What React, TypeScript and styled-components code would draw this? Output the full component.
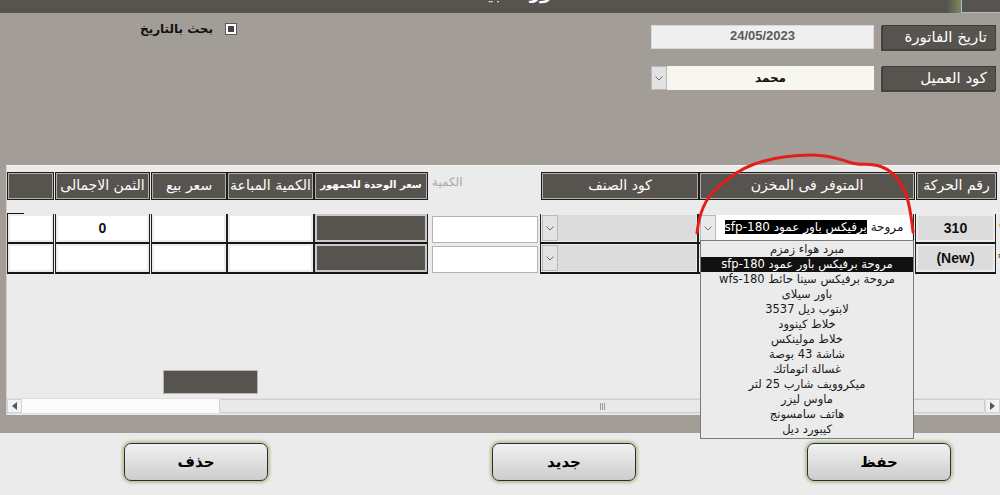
import * as React from "react";
import styled, { createGlobalStyle } from "styled-components";

const GlobalStyle = createGlobalStyle`
  html, body {
    margin: 0;
    padding: 0;
    background: #ebebeb;
  }
  body {
    font-family: "Liberation Sans", "DejaVu Sans", sans-serif;
  }
`;

const DARK = "#57544f";
const FORM_BG = "#a29e97";
const PANEL_BG = "#ebebeb";

interface ICol {
  x: number;
  w: number;
}

// column geometry shared by header and data rows
const COLS: ICol[] = [
  { x: 7, w: 47 },
  { x: 55, w: 95 },
  { x: 151, w: 76 },
  { x: 227, w: 87 },
  { x: 314, w: 114 },
  { x: 432, w: 107 },
  { x: 541, w: 158 },
  { x: 699, w: 216 },
  { x: 916, w: 81 },
];

const gapBefore = (i: number) => (i === 0 ? 0 : COLS[i].x - (COLS[i - 1].x + COLS[i - 1].w));

const ITEMS = [
  "مبرد هواء زمزم",
  "مروحة برفيكس باور عمود sfp-180",
  "مروحة  برفيكس سينا حائط wfs-180",
  "باور سيلاى",
  "لابتوب ديل 3537",
  "خلاط كينوود",
  "خلاط مولينكس",
  "شاشة 43 بوصة",
  "غسالة اتوماتك",
  "ميكروويف شارب 25 لتر",
  "ماوس ليزر",
  "هاتف سامسونج",
  "كيبورد  ديل",
];

const Root = styled.div`
  position: relative;
  width: 1000px;
  height: 495px;
  overflow: hidden;
  background: ${PANEL_BG};
`;

const TitleBar = styled.div`
  display: flex;
  height: 13px;
  background: ${DARK};
  overflow: hidden;
`;

const TitleText = styled.div`
  margin: -18px 0 0 452px;
  color: #fff;
  font: bold 18px "DejaVu Sans", sans-serif;
  direction: rtl;
  white-space: nowrap;
`;

const Spacer = styled.div`
  flex: 1;
`;

const GreenFade = styled.div`
  width: 14px;
  background: linear-gradient(to right, ${DARK}, #7e8a5c);
`;

const CornerTab = styled.div`
  width: 38px;
  border-left: 1px solid #a9bccd;
  border-bottom: 1px solid #a9bccd;
  background: ${DARK};
`;

const FormArea = styled.div`
  display: flex;
  justify-content: space-between;
  height: 152px;
  background: ${FORM_BG};
`;

const SearchBox = styled.div`
  display: flex;
  align-items: center;
  gap: 12px;
  height: 14px;
  margin: 9px 0 0 140px;
`;

const SearchLabel = styled.span`
  font: bold 12px "DejaVu Sans", sans-serif;
  color: #111;
  direction: rtl;
`;

const CheckBox = styled.div`
  display: flex;
  align-items: center;
  justify-content: center;
  box-sizing: border-box;
  width: 12px;
  height: 12px;
  background: #fff;
  border: 1px solid #5a5a5a;
  &::after {
    content: "";
    width: 6px;
    height: 6px;
    background: #444;
  }
`;

const Fields = styled.div`
  display: flex;
  flex-direction: column;
  gap: 16px;
  padding: 12px 4px 0 0;
`;

const FieldRow = styled.div`
  display: flex;
  align-items: flex-start;
  gap: 8px;
`;

const FieldLabel = styled.div`
  box-sizing: border-box;
  width: 114px;
  height: 25px;
  background: ${DARK};
  border: 1px solid #3f3d39;
  box-shadow: -1px 1px 0 #4a4844;
  color: #fff;
  font: 15px "DejaVu Sans", sans-serif;
  direction: rtl;
  padding-right: 8px;
  line-height: 23px;
  text-align: right;
`;

const DateInput = styled.div`
  box-sizing: border-box;
  width: 223px;
  height: 24px;
  background: #efefef;
  border: 1px solid #d9d9d9;
  color: #5b5b5b;
  font: bold 13px "Liberation Sans", sans-serif;
  text-align: center;
  line-height: 20px;
`;

const Combo = styled.div<{ $w: number; $h: number; $bg: string }>`
  display: flex;
  box-sizing: border-box;
  width: ${(p) => p.$w}px;
  height: ${(p) => p.$h}px;
  background: ${(p) => p.$bg};
`;

const ComboButton = styled.div<{ $bg?: string }>`
  display: flex;
  align-items: center;
  justify-content: center;
  box-sizing: border-box;
  width: 16px;
  height: 100%;
  background: ${(p) => p.$bg || "#e1e1e1"};
  border: 1px solid #b9b9b9;
  color: #666;
`;

const ComboField = styled.div<{ $bold?: boolean }>`
  flex: 1;
  text-align: center;
  direction: rtl;
  font: ${(p) => (p.$bold ? "bold 12px" : "12px")} "DejaVu Sans", sans-serif;
  color: #111;
  line-height: 24px;
  white-space: nowrap;
  overflow: hidden;
`;

const Chevron = () => (
  <svg width="8" height="5" viewBox="0 0 8 5">
    <path d="M0.5 0.5 L4 4 L7.5 0.5" fill="none" stroke="#6a6a6a" strokeWidth="1" />
  </svg>
);

const PanelWrap = styled.div`
  background: ${FORM_BG};
  padding: 0 0 18px 6px;
`;

const Panel = styled.div`
  position: relative;
  display: flex;
  flex-direction: column;
  box-sizing: border-box;
  height: 250px;
  background: ${PANEL_BG};
  border-top: 1px solid #fafafa;
  border-left: 1px solid #d0d0d0;
`;

const HeaderRow = styled.div`
  display: flex;
  height: 28px;
  margin-top: 6px;
`;

const HeadCell = styled.div<{ $w: number; $ml: number; $small?: boolean; $plain?: boolean }>`
  box-sizing: border-box;
  width: ${(p) => p.$w}px;
  margin-left: ${(p) => p.$ml}px;
  background: ${(p) => (p.$plain ? "transparent" : DARK)};
  border: ${(p) => (p.$plain ? "none" : "1px solid #1c1c1c")};
  box-shadow: ${(p) => (p.$plain ? "none" : "inset 0 0 0 1px #b4b1ab")};
  color: ${(p) => (p.$plain ? "#a7a7a7" : "#fff")};
  font: ${(p) => (p.$small ? "bold 10px" : p.$plain ? "12px" : "14px")} "DejaVu Sans", sans-serif;
  direction: rtl;
  text-align: ${(p) => (p.$plain ? "left" : "center")};
  line-height: ${(p) => (p.$small ? "24px" : p.$plain ? "20px" : "25px")};
  white-space: nowrap;
  overflow: hidden;
`;

const PlainLabel = styled.span`
  display: inline-block;
`;

const TopMark = styled.div`
  width: 17px;
  height: 1px;
  margin-top: 13px;
  background: #111;
`;

const DataRow = styled.div`
  position: relative;
  display: flex;
  height: 30px;
`;

type CellKind = "white" | "dark" | "input" | "grey" | "combo";

const Cell = styled.div<{ $w: number; $ml: number; $kind: CellKind }>`
  display: flex;
  box-sizing: border-box;
  width: ${(p) => p.$w}px;
  margin-left: ${(p) => p.$ml}px;
  height: ${(p) => (p.$kind === "input" ? "27px" : "30px")};
  margin-top: ${(p) => (p.$kind === "input" ? "2px" : "0")};
  background: ${(p) =>
    p.$kind === "dark" ? DARK : p.$kind === "grey" ? "#dcdcdc" : p.$kind === "combo" ? PANEL_BG : "#fff"};
  border: ${(p) => (p.$kind === "input" ? "1px solid #b3b3b3" : "none")};
  border-left: ${(p) => (p.$kind === "input" ? "1px solid #b3b3b3" : "1px solid #202020")};
  border-right: ${(p) => (p.$kind === "input" ? "1px solid #b3b3b3" : "1px solid #202020")};
  border-bottom: ${(p) => (p.$kind === "input" ? "1px solid #b3b3b3" : "2px solid #151515")};
  box-shadow: ${(p) =>
    p.$kind === "input" || p.$kind === "combo"
      ? "none"
      : p.$kind === "dark"
      ? "inset 0 0 0 2px #c9c9c9"
      : p.$kind === "grey"
      ? "inset 0 0 0 2px #ebebeb"
      : "inset 0 0 0 2px #ececec"};
  align-items: center;
  justify-content: center;
  font: bold 14px "Liberation Sans", "DejaVu Sans", sans-serif;
  color: #111;
`;

const CellCombo = styled.div<{ $bg: string }>`
  display: flex;
  flex: 1;
  height: 26px;
  margin: 1px;
  background: ${(p) => p.$bg};
`;

const Selected = styled.span`
  background: #000;
  color: #fff;
`;

const RecordMark = styled.div<{ $color: string }>`
  position: absolute;
  right: -6px;
  top: 6px;
  width: 8px;
  font: bold 13px "DejaVu Sans", sans-serif;
  color: ${(p) => p.$color};
`;

const FooterBox = styled.div`
  box-sizing: border-box;
  width: 95px;
  height: 24px;
  margin: 96px 0 0 156px;
  background: ${DARK};
  border: 1px solid #b6b6b6;
`;

const ScrollBar = styled.div`
  display: flex;
  height: 16px;
  margin-top: 4px;
  background: #f0f0f0;
  border-top: 1px solid #dedede;
  border-bottom: 1px solid #dedede;
  box-sizing: border-box;
`;

const ScrollArrow = styled.div`
  display: flex;
  align-items: center;
  justify-content: center;
  width: 15px;
  background: #f3f3f3;
  border: 1px solid #d4d4d4;
  box-sizing: border-box;
`;

const ScrollTrack = styled.div`
  width: 197px;
  background: #fbfbfb;
`;

const ScrollThumb = styled.div`
  display: flex;
  align-items: center;
  justify-content: center;
  flex: 1;
  background: #e9e9e9;
  border: 1px solid #cfcfcf;
  border-radius: 2px;
  box-sizing: border-box;
`;

const Grip = styled.div`
  width: 5px;
  height: 7px;
  background: repeating-linear-gradient(to right, #9a9a9a 0 1px, transparent 1px 2px);
`;

const ButtonBar = styled.div`
  display: flex;
  height: 62px;
  padding-top: 10px;
  box-sizing: border-box;
`;

const ActionButton = styled.button<{ $ml: number }>`
  width: 144px;
  height: 38px;
  margin-left: ${(p) => p.$ml}px;
  border: 1px solid #2e2e2e;
  border-radius: 7px;
  background: linear-gradient(#f1f1f1, #cdcdcd);
  box-shadow: 0 0 3px 2px #b3c497;
  font: bold 15px "DejaVu Sans", sans-serif;
  color: #000;
  direction: rtl;
  padding: 0;
`;

const DropList = styled.div`
  position: absolute;
  left: 700px;
  top: 240px;
  width: 214px;
  height: 199px;
  box-sizing: border-box;
  padding-top: 1px;
  background: #ebebeb;
  border: 1px solid #7a7a7a;
  z-index: 2;
`;

const DropItem = styled.div<{ $active?: boolean }>`
  height: 15px;
  line-height: 15px;
  text-align: center;
  direction: rtl;
  font: 11.5px "DejaVu Sans", sans-serif;
  color: ${(p) => (p.$active ? "#fff" : "#1a1a1a")};
  background: ${(p) => (p.$active ? "#111" : "transparent")};
  white-space: nowrap;
`;

const Scribble = styled.svg`
  position: absolute;
  left: 0;
  top: 0;
  z-index: 3;
  pointer-events: none;
`;

const headers: { label: string; small?: boolean; plain?: boolean }[] = [
  { label: "" },
  { label: "الثمن الاجمالى" },
  { label: "سعر بيع" },
  { label: "الكمية المباعة" },
  { label: "سعر الوحدة للجمهور", small: true },
  { label: "الكمية", plain: true },
  { label: "كود الصنف" },
  { label: "المتوفر فى المخزن" },
  { label: "رقم الحركة" },
];

const renderRow = (first: boolean) =>
  COLS.map((c, i) => {
    const ml = gapBefore(i);
    if (i === 4) return <Cell key={i} $w={c.w} $ml={ml} $kind="dark" />;
    if (i === 5) return <Cell key={i} $w={c.w - 1} $ml={ml} $kind="input" />;
    if (i === 6)
      return (
        <Cell key={i} $w={c.w} $ml={ml} $kind="combo">
          <CellCombo $bg="#dcdcdc">
            <ComboButton $bg="#e3e3e3">
              <Chevron />
            </ComboButton>
          </CellCombo>
        </Cell>
      );
    if (i === 7)
      return (
        <Cell key={i} $w={c.w} $ml={ml} $kind="combo">
          <CellCombo $bg="#fff">
            <ComboButton $bg="#e9e9e9">
              <Chevron />
            </ComboButton>
            {first && (
              <ComboField>
                <span>مروحة </span>
                <Selected>برفيكس باور عمود sfp-180</Selected>
              </ComboField>
            )}
          </CellCombo>
        </Cell>
      );
    if (i === 8)
      return (
        <Cell key={i} $w={c.w} $ml={ml} $kind="grey">
          {first ? "310" : "(New)"}
        </Cell>
      );
    return (
      <Cell key={i} $w={c.w} $ml={ml} $kind="white">
        {first && i === 1 ? "0" : ""}
      </Cell>
    );
  });

const App: React.FC = () => {
  return (
    <>
      <GlobalStyle />
      <Root>
        <TitleBar>
          <TitleText>فاتورة مبيعات</TitleText>
          <Spacer />
          <GreenFade />
          <CornerTab />
        </TitleBar>

        <FormArea>
          <SearchBox>
            <SearchLabel>بحث بالتاريخ</SearchLabel>
            <CheckBox />
          </SearchBox>
          <Fields>
            <FieldRow>
              <DateInput>24/05/2023</DateInput>
              <FieldLabel>تاريخ الفاتورة</FieldLabel>
            </FieldRow>
            <FieldRow>
              <Combo $w={223} $h={24} $bg="#f7f7ef">
                <ComboButton $bg="#e2e2e2">
                  <Chevron />
                </ComboButton>
                <ComboField $bold>محمد</ComboField>
              </Combo>
              <FieldLabel>كود العميل</FieldLabel>
            </FieldRow>
          </Fields>
        </FormArea>

        <PanelWrap>
          <Panel>
            <HeaderRow>
              {headers.map((h, i) => (
                <HeadCell
                  key={i}
                  $w={COLS[i].w}
                  $ml={gapBefore(i)}
                  $small={h.small}
                  $plain={h.plain}
                >
                  {h.plain ? <PlainLabel>{h.label}</PlainLabel> : h.label}
                </HeadCell>
              ))}
            </HeaderRow>
            <TopMark />
            <DataRow>
              {renderRow(true)}
              <RecordMark $color="#c8a000">✎</RecordMark>
            </DataRow>
            <DataRow>
              {renderRow(false)}
              <RecordMark $color="#222">*</RecordMark>
            </DataRow>
            <FooterBox />
            <ScrollBar>
              <ScrollArrow>
                <svg width="5" height="8" viewBox="0 0 5 8">
                  <path d="M5 0 L0 4 L5 8 Z" fill="#4a5670" />
                </svg>
              </ScrollArrow>
              <ScrollTrack />
              <ScrollThumb>
                <Grip />
              </ScrollThumb>
              <ScrollArrow>
                <svg width="5" height="8" viewBox="0 0 5 8">
                  <path d="M0 0 L5 4 L0 8 Z" fill="#4a5670" />
                </svg>
              </ScrollArrow>
            </ScrollBar>
          </Panel>
        </PanelWrap>

        <ButtonBar>
          <ActionButton $ml={124}>حذف</ActionButton>
          <ActionButton $ml={224}>جديد</ActionButton>
          <ActionButton $ml={171}>حفظ</ActionButton>
        </ButtonBar>

        <DropList>
          {ITEMS.map((t, i) => (
            <DropItem key={i} $active={i === 1}>
              {t}
            </DropItem>
          ))}
        </DropList>

        <Scribble width="1000" height="495" viewBox="0 0 1000 495">
          <path
            d="M697,233 C699,214 705,199 716,189 C727,179 738,170 752,165 C770,158 790,155 812,155 C830,155 842,160 852,163 C862,166 870,162 882,167 C895,172 904,186 908,201 C911,213 912,223 913,232"
            fill="none"
            stroke="#e41e1a"
            strokeWidth="3"
            strokeLinecap="round"
          />
        </Scribble>
      </Root>
    </>
  );
};

export default App;
